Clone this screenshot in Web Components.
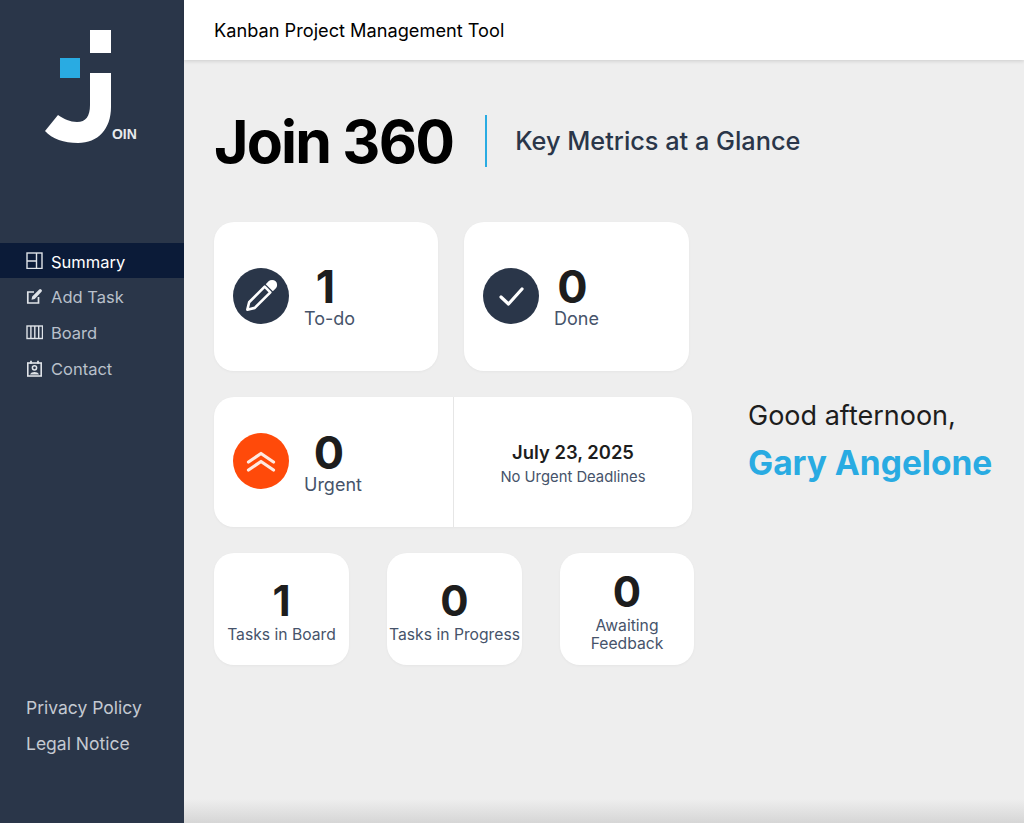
<!DOCTYPE html>
<html lang="en">
<head>
<meta charset="utf-8">
<title>Join 360</title>
<style>
    html, body { margin: 0; height: 100%; }
    body { font-family: Inter, "Liberation Sans", sans-serif; background: #eeeeee; overflow: hidden; }
</style>
</head>
<body>
<app-shell>
    <side-bar slot="side"></side-bar>
    <top-bar slot="top">Kanban Project Management Tool</top-bar>
    <summary-view slot="main"></summary-view>
</app-shell>

<script>
const icons = {
    summary: '<rect x="1" y="1" width="15" height="15.500" fill="none" stroke="currentColor" stroke-width="1.4"/><path d="M1 9h9.500M10.500 1v15.500" fill="none" stroke="currentColor" stroke-width="1.4"/>',
    add: '<path d="M12.500 9v6H1.800V4H8" fill="none" stroke="currentColor" stroke-width="1.7"/><path d="M5.500 11.800l.7-3.300L13.200 1.500a1.400 1.400 0 0 1 2 0l.3.3a1.400 1.400 0 0 1 0 2L8.700 11z" fill="currentColor"/>',
    board: '<rect x="1" y="2" width="15.500" height="12.500" fill="none" stroke="currentColor" stroke-width="1.4"/><path d="M4.900 2v12.500M8.800 2v12.500M12.700 2v12.500" stroke="currentColor" stroke-width="1.4"/>',
    contact: '<rect x="1.800" y="3" width="13.400" height="13" fill="none" stroke="currentColor" stroke-width="1.6"/><path d="M5 .8v3M12 .8v3" stroke="currentColor" stroke-width="1.800"/><circle cx="8.500" cy="7.800" r="2.100" fill="none" stroke="currentColor" stroke-width="1.500"/><path d="M4 14.500c1-2 2.500-2.600 4.500-2.600s3.500.6 4.500 2.600z" fill="currentColor"/>'
};

class AppShell extends HTMLElement {
    constructor() {
        super();
        this.attachShadow({ mode: 'open' }).innerHTML = `
            <style>
                :host { display: flex; height: 823px; position: relative; overflow: hidden; }
                .right { flex: 1; display: flex; flex-direction: column; min-width: 0; }
                .fade {
                    position: absolute; left: 184px; right: 0; bottom: 0; height: 24px;
                    background: linear-gradient(to bottom, rgba(0,0,0,0), rgba(0,0,0,0.1));
                }
            </style>
            <slot name="side"></slot>
            <div class="right">
                <slot name="top"></slot>
                <slot name="main"></slot>
            </div>
            <div class="fade"></div>
        `;
    }
}

class NavItem extends HTMLElement {
    constructor() {
        super();
        const icon = icons[this.getAttribute('icon')];
        this.attachShadow({ mode: 'open' }).innerHTML = `
            <style>
                :host {
                    display: flex; align-items: center; gap: 8px; height: 36px; padding-left: 26px;
                    font-size: 16.500px; color: #b9c0cb;
                }
                :host([active]) { background: #0b1b38; color: #fff; height: 35px; }
                svg { width: 17px; height: 17px; flex: none; color: #dfe3e8; }
                span { position: relative; top: 1px; }
            </style>
            <svg viewBox="0 0 17 17">${icon}</svg>
            <span><slot></slot></span>
        `;
    }
}

class SideBar extends HTMLElement {
    constructor() {
        super();
        this.attachShadow({ mode: 'open' }).innerHTML = `
            <style>
                :host {
                    display: flex; flex-direction: column; width: 184px; flex: none; height: 823px;
                    background: #2a3649; box-sizing: border-box;
                }
                .logo { height: 243px; padding: 29px 0 0 44px; box-sizing: border-box; position: relative; }
                .logo svg { width: 68px; height: 115px; display: block; }
                .oin {
                    position: absolute; left: 112px; top: 125px;
                    font-family: "Liberation Sans", sans-serif; font-size: 15.500px; font-weight: 700;
                    color: #e8eaed; transform: scaleX(.9); transform-origin: left;
                }
                nav { display: flex; flex-direction: column; }
                .legal {
                    margin-top: auto; padding: 0 0 68px 26px; display: flex; flex-direction: column; gap: 14px;
                    font-size: 17.500px; line-height: 22px; color: #c4c9d1;
                }
            </style>
            <div class="logo">
                <svg viewBox="0 0 68 115">
                    <rect x="46" y="1" width="21" height="23" fill="#fff"/>
                    <rect x="16" y="29" width="20" height="20" fill="#29abe2"/>
                    <path d="M46 44H67V78C67 100 54 114 34 114C20 114 8 110 1 102L14 86C20 90 26 93 33 93C42 93 46 87 46 76Z" fill="#fff"/>
                </svg>
                <span class="oin">OIN</span>
            </div>
            <nav>
                <nav-item icon="summary" active>Summary</nav-item>
                <nav-item icon="add">Add Task</nav-item>
                <nav-item icon="board">Board</nav-item>
                <nav-item icon="contact">Contact</nav-item>
            </nav>
            <div class="legal">
                <span>Privacy Policy</span>
                <span>Legal Notice</span>
            </div>
        `;
    }
}

class TopBar extends HTMLElement {
    constructor() {
        super();
        this.attachShadow({ mode: 'open' }).innerHTML = `
            <style>
                :host {
                    display: flex; align-items: center; height: 60px; padding-left: 30px; flex: none;
                    background: #fff; color: #000; font-size: 18.200px;
                    box-shadow: 0 1px 4px rgba(0,0,0,.15); position: relative;
                }
            </style>
            <slot></slot>
        `;
    }
}

class StatCard extends HTMLElement {
    constructor() {
        super();
        this.attachShadow({ mode: 'open' }).innerHTML = `
            <style>
                :host {
                    display: flex; background: #fff; border-radius: 20px; box-sizing: border-box;
                    box-shadow: 0 1px 3px rgba(0,0,0,.04);
                }
            </style>
            <slot></slot>
        `;
    }
}

class MetricBlock extends HTMLElement {
    constructor() {
        super();
        const icon = this.getAttribute('icon');
        const value = this.getAttribute('value');
        const label = this.getAttribute('label');
        const glyphs = {
            pencil: '<g transform="rotate(45 28.500 27.500)"><path d="M24.500 19h8v22l-4 6.500-4-6.500z" fill="none" stroke="#fff" stroke-width="2.600" stroke-linejoin="round"/><path d="M23.500 16.500v-4a5 5 0 0 1 10 0v4z" fill="#fff"/></g>',
            check: '<path d="M18 29l7.500 7L39 21" fill="none" stroke="#fff" stroke-width="3.200" stroke-linecap="round" stroke-linejoin="round"/>',
            chevrons: '<path d="M15.500 29L28 20.500 40.500 29" fill="none" stroke="#fff" stroke-opacity=".88" stroke-width="3.200" stroke-linecap="round" stroke-linejoin="round"/><path d="M15.500 37L28 28.500 40.500 37" fill="none" stroke="#fff" stroke-opacity=".88" stroke-width="3.200" stroke-linecap="round" stroke-linejoin="round"/>'
        };
        const bg = icon === 'chevrons' ? '#ff4a0a' : '#2a3649';
        this.attachShadow({ mode: 'open' }).innerHTML = `
            <style>
                :host { display: flex; align-items: center; gap: 15px; padding-left: 19px; flex: 1; }
                svg { width: 56px; height: 56px; flex: none; display: block; position: relative; top: -1px; }
                .text { display: flex; flex-direction: column; align-items: center; }
                .value { font-size: 45px; font-weight: 700; line-height: 45px; color: #1d1d1d; padding-right: 8px; }
                .label { font-size: 18px; line-height: 20px; color: #46536a; }
            </style>
            <svg viewBox="0 0 56 56"><circle cx="28" cy="28" r="28" fill="${bg}"/>${glyphs[icon]}</svg>
            <div class="text">
                <span class="value">${value}</span>
                <span class="label">${label}</span>
            </div>
        `;
    }
}

class MiniCard extends HTMLElement {
    constructor() {
        super();
        const value = this.getAttribute('value');
        const label = this.getAttribute('label');
        this.attachShadow({ mode: 'open' }).innerHTML = `
            <style>
                :host {
                    display: flex; flex-direction: column; align-items: center; justify-content: center;
                    width: 135px; height: 112px; flex: none; box-sizing: border-box; padding-top: 6px;
                    background: #fff; border-radius: 20px; text-align: center;
                    box-shadow: 0 1px 3px rgba(0,0,0,.04);
                }
                .value { font-size: 42px; font-weight: 700; line-height: 42px; color: #1d1d1d; }
                .label { font-size: 15.700px; line-height: 18px; color: #46536a; white-space: pre-line; margin-top: 3.500px; }
            </style>
            <span class="value">${value}</span>
            <span class="label">${label}</span>
        `;
    }
}

class SummaryView extends HTMLElement {
    constructor() {
        super();
        this.attachShadow({ mode: 'open' }).innerHTML = `
            <style>
                :host { display: block; flex: 1; padding: 0 0 0 30px; }
                .head { display: flex; align-items: center; height: 54px; margin: 54px 0 54px; }
                h1 { margin: 0; font-size: 59px; font-weight: 700; letter-spacing: -1.800px; color: #000; white-space: nowrap; }
                .rule { width: 2px; height: 52px; background: #29abe2; margin: 0 28px 0 32px; }
                h2 { margin: -2px 0 0; font-size: 25.300px; font-weight: 500; color: #2a3649; white-space: nowrap; }
                .body { display: flex; }
                .grid { display: flex; flex-direction: column; gap: 26px; width: 481px; flex: none; }
                .row { display: flex; }
                .top { gap: 26px; }
                .top stat-card { width: 224px; height: 149px; }
                .top stat-card + stat-card { width: 225px; }
                .wide { width: 478px; height: 130px; }
                .deadline {
                    width: 239px; flex: none; border-left: 1px solid #e6e6e6; display: flex; flex-direction: column;
                    align-items: center; justify-content: center; box-sizing: border-box; padding-top: 5px;
                }
                .date { font-size: 18.400px; font-weight: 600; color: #1d1d1d; line-height: 25px; }
                .note { font-size: 14.800px; color: #46536a; line-height: 25px; }
                .mini { gap: 38px; }
                .mini mini-card:last-child { width: 134px; }
                .greet { margin: 177px 0 0 53px; white-space: nowrap; }
                .hello { font-size: 27px; line-height: 34px; color: #1d1d1d; }
                .name { font-size: 33.500px; font-weight: 700; line-height: 40px; color: #29abe2; margin-top: 10px; }
            </style>
            <div class="head">
                <h1>Join 360</h1>
                <div class="rule"></div>
                <h2>Key Metrics at a Glance</h2>
            </div>
            <div class="body">
                <div class="grid">
                    <div class="row top">
                        <stat-card><metric-block icon="pencil" value="1" label="To-do"></metric-block></stat-card>
                        <stat-card><metric-block icon="check" value="0" label="Done"></metric-block></stat-card>
                    </div>
                    <div class="row">
                        <stat-card class="wide">
                            <metric-block icon="chevrons" value="0" label="Urgent"></metric-block>
                            <div class="deadline">
                                <span class="date">July 23, 2025</span>
                                <span class="note">No Urgent Deadlines</span>
                            </div>
                        </stat-card>
                    </div>
                    <div class="row mini">
                        <mini-card value="1" label="Tasks in Board"></mini-card>
                        <mini-card value="0" label="Tasks in Progress"></mini-card>
                        <mini-card value="0" label="Awaiting
Feedback"></mini-card>
                    </div>
                </div>
                <div class="greet">
                    <div class="hello">Good afternoon,</div>
                    <div class="name">Gary Angelone</div>
                </div>
            </div>
        `;
    }
}

customElements.define('nav-item', NavItem);
customElements.define('metric-block', MetricBlock);
customElements.define('mini-card', MiniCard);
customElements.define('stat-card', StatCard);
customElements.define('side-bar', SideBar);
customElements.define('top-bar', TopBar);
customElements.define('summary-view', SummaryView);
customElements.define('app-shell', AppShell);
</script>
</body>
</html>
